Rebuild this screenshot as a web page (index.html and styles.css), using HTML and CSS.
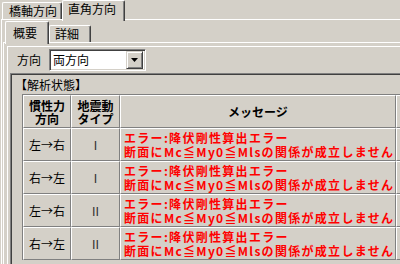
FILE: index.html
```html
<!DOCTYPE html>
<html lang="ja">
<head>
<meta charset="utf-8">
<title>解析状態</title>
<link rel="stylesheet" href="styles.css">
</head>
<body>
<div class="app">
  <div class="tabs outer-tabs">
    <div class="tab t-kyojiku">橋軸方向</div>
    <div class="tab active t-chokkaku">直角方向</div>
  </div>
  <div class="outer-panel">
    <div class="tabs inner-tabs">
      <div class="tab active t-gaiyou">概要</div>
      <div class="tab t-shousai">詳細</div>
    </div>
    <div class="inner-panel">
      <div class="group">
        <div class="combo-row">
          <span class="lbl">方向</span>
          <div class="combo">
            <span class="combo-text">両方向</span>
            <span class="combo-btn"><svg width="7" height="4" viewBox="0 0 7 4"><path d="M0 0h7L3.5 4z" fill="#000"/></svg></span>
          </div>
        </div>
        <div class="sunken">
          <div class="caption">【解析状態】</div>
          <div class="grid">
            <div class="cell head"><span class="ln">慣性力</span><span class="ln">方向</span></div>
            <div class="cell head"><span class="ln">地震動</span><span class="ln">タイプ</span></div>
            <div class="cell head msg-head">メッセージ</div>
            <div class="cell"></div>

            <div class="cell">左→右</div>
            <div class="cell num">Ⅰ</div>
            <div class="cell err"><span class="ln">エラー:降伏剛性算出エラー</span><span class="ln">断面にMc≦My0≦Mlsの関係が成立しません</span></div>
            <div class="cell"></div>

            <div class="cell">右→左</div>
            <div class="cell num">Ⅰ</div>
            <div class="cell err"><span class="ln">エラー:降伏剛性算出エラー</span><span class="ln">断面にMc≦My0≦Mlsの関係が成立しません</span></div>
            <div class="cell"></div>

            <div class="cell">左→右</div>
            <div class="cell num">Ⅱ</div>
            <div class="cell err"><span class="ln">エラー:降伏剛性算出エラー</span><span class="ln">断面にMc≦My0≦Mlsの関係が成立しません</span></div>
            <div class="cell"></div>

            <div class="cell">右→左</div>
            <div class="cell num">Ⅱ</div>
            <div class="cell err"><span class="ln">エラー:降伏剛性算出エラー</span><span class="ln">断面にMc≦My0≦Mlsの関係が成立しません</span></div>
            <div class="cell"></div>
          </div>
        </div>
      </div>
    </div>
  </div>
</div>
</body>
</html>
```

FILE: styles.css
```css
* { box-sizing: border-box; margin: 0; padding: 0; }
html, body { width: 400px; height: 264px; overflow: hidden; background: #d4d0c8; }
body {
  font-family: "Noto Sans CJK JP", "Noto Sans", sans-serif;
  font-size: 12px;
  line-height: 14px;
  color: #000;
}
.app { width: 440px; }

.tabs { display: flex; align-items: flex-end; position: relative; z-index: 1; }
.tab {
  background: #d4d0c8;
  border-top: 1px solid #fff;
  border-left: 1px solid #fff;
  border-right: 1px solid #404040;
  box-shadow: inset -1px 0 #808080;
  border-radius: 2px 2px 0 0;
  height: 17px;
  padding: 1px 0 0 6px;
  white-space: nowrap;
}
.tab.active { position: relative; z-index: 2; }

.outer-tabs { height: 19px; padding-left: 2px; }
.t-kyojiku { width: 60px; }
.t-chokkaku { width: 63px; height: 21px; margin-bottom: -2px; padding-top: 1px; padding-left: 5px; }

.outer-panel {
  margin-left: 1px;
  border-top: 1px solid #fff;
  border-left: 1px solid #fff;
}
.inner-tabs { height: 22px; padding-left: 3px; }
.t-gaiyou { width: 44px; height: 23px; margin-bottom: -2px; padding: 4px 0 0 7px; }
.t-shousai { width: 42px; padding-left: 5px; }

.inner-panel {
  margin-left: 1px;
  border-top: 1px solid #fff;
  border-left: 1px solid #fff;
  padding: 3px 0 0 3px;
}
.group {
  border-top: 1px solid #fff;
  border-left: 1px solid #fff;
}
.combo-row {
  height: 26px;
  display: flex;
  align-items: center;
  padding-left: 9px;
}
.lbl { width: 24px; margin-right: 8px; }
.combo {
  width: 97px;
  height: 22px;
  display: flex;
  align-items: center;
  background: #fff;
  border: 1px solid;
  border-color: #808080 #fff #fff #808080;
  box-shadow: inset 1px 1px #404040, inset -1px -1px #d4d0c8;
  padding: 0 2px 0 3px;
}
.combo-text { flex: 1; }
.combo-btn {
  width: 17px;
  height: 18px;
  display: flex;
  align-items: center;
  justify-content: center;
  background: #d4d0c8;
  border: 1px solid;
  border-color: #d4d0c8 #404040 #404040 #d4d0c8;
  box-shadow: inset 1px 1px #fff, inset -1px -1px #808080;
}

.sunken {
  margin-left: 2px;
  border-top: 1px solid #808080;
  border-left: 1px solid #808080;
  box-shadow: inset 1px 1px #404040;
  padding: 3px 0 0 2px;
  height: 200px;
}
.caption { padding-left: 2px; height: 16px; padding-top: 1px; }
.grid {
  margin-left: 9px;
  margin-top: 1px;
  display: grid;
  grid-template-columns: 48px 49px 276px 60px;
  grid-template-rows: 33px 33px 33px 33px 33px;
  border-top: 1px solid #808080;
  border-left: 1px solid #808080;
}
.cell {
  border: 1px solid;
  border-color: #fff #808080 #808080 #fff;
  display: flex;
  align-items: center;
  justify-content: center;
  text-align: center;
  white-space: nowrap;
}
.ln { display: block; height: 14px; line-height: 14px; overflow: visible; }
.head { font-weight: bold; flex-direction: column; }
.head .ln { height: 13px; }
.num { font-size: 12px; color: #303030; }
.err {
  flex-direction: column;
  align-items: flex-start;
  padding-left: 3px;
  color: #ff0000;
  font-weight: bold;
  letter-spacing: 1.3px;
  overflow: hidden;
}
```
